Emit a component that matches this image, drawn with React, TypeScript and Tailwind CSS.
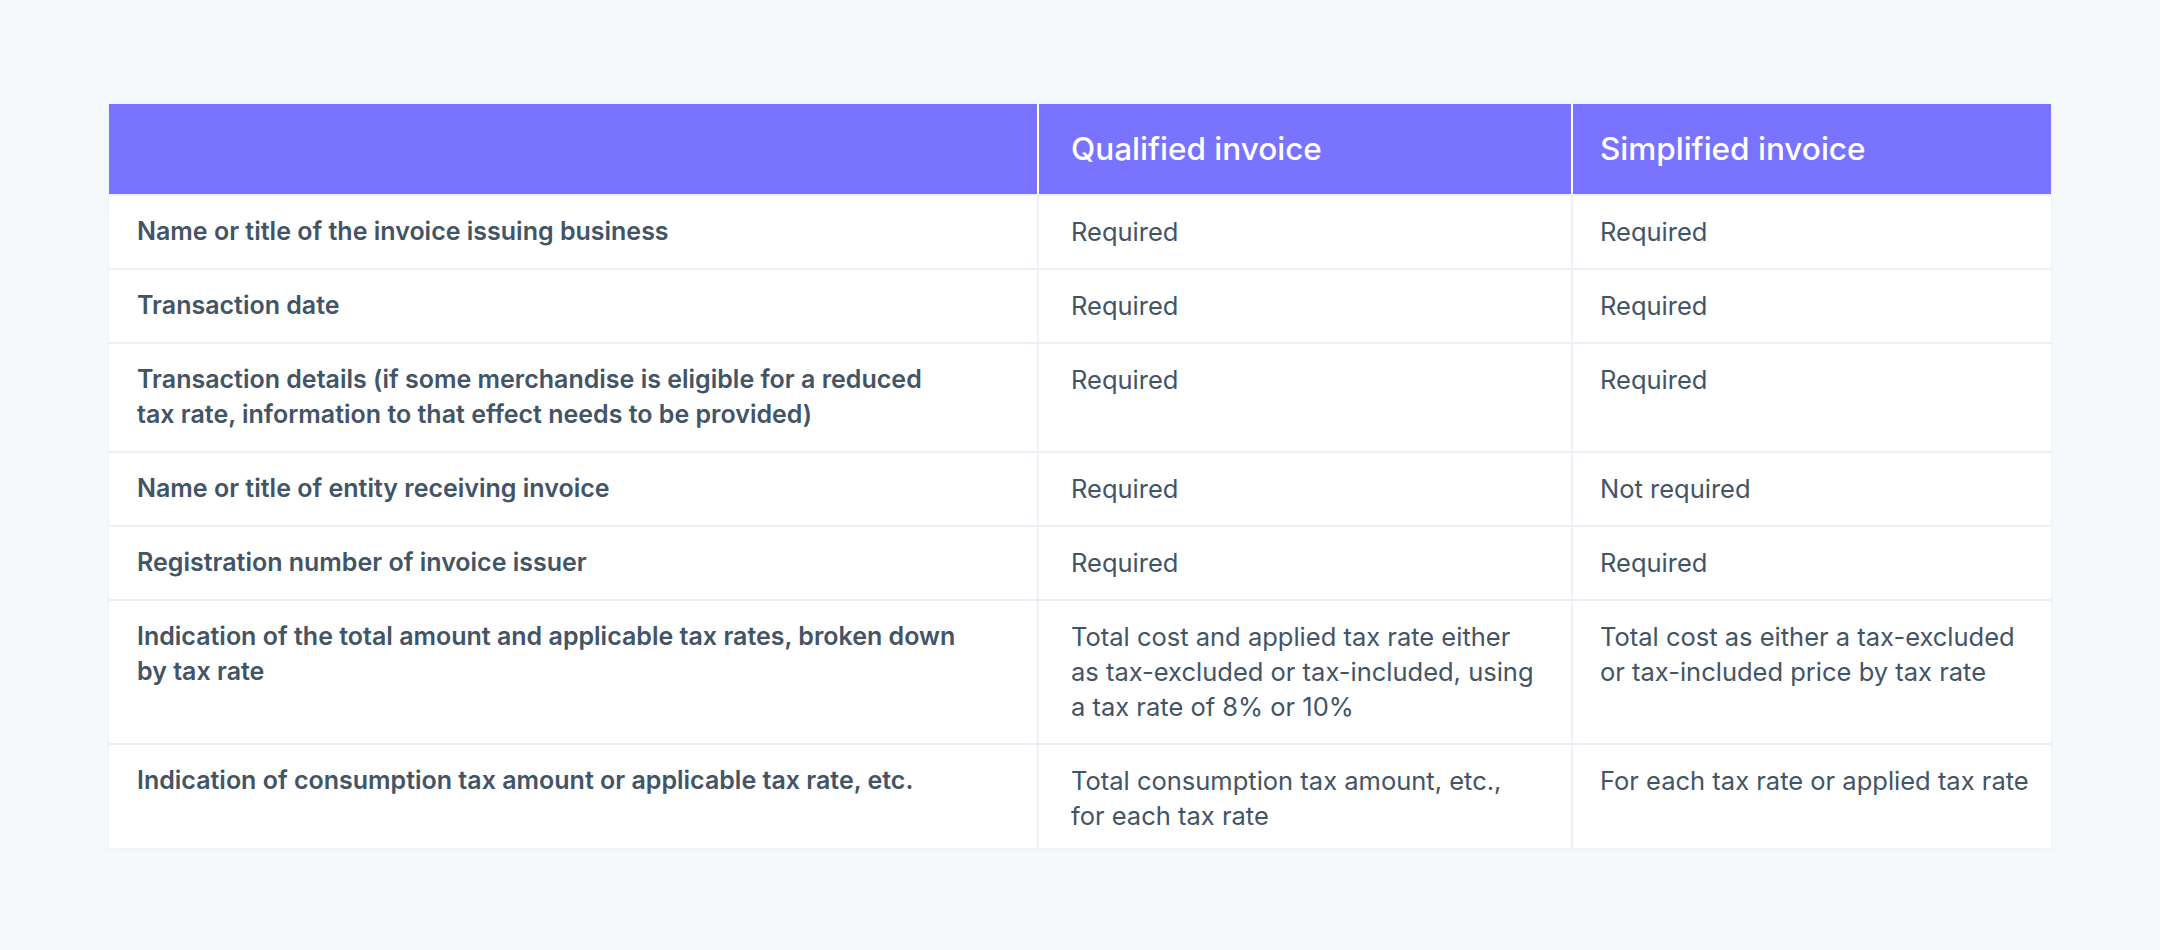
import React from "react";

type Row = { label: string[]; q: string[]; s: string[] };

const rows: Row[] = [
  { label: ["Name or title of the invoice issuing business"], q: ["Required"], s: ["Required"] },
  { label: ["Transaction date"], q: ["Required"], s: ["Required"] },
  {
    label: [
      "Transaction details (if some merchandise is eligible for a reduced",
      "tax rate, information to that effect needs to be provided)",
    ],
    q: ["Required"],
    s: ["Required"],
  },
  { label: ["Name or title of entity receiving invoice"], q: ["Required"], s: ["Not required"] },
  { label: ["Registration number of invoice issuer"], q: ["Required"], s: ["Required"] },
  {
    label: ["Indication of the total amount and applicable tax rates, broken down", "by tax rate"],
    q: ["Total cost and applied tax rate either", "as tax-excluded or tax-included, using", "a tax rate of 8% or 10%"],
    s: ["Total cost as either a tax-excluded", "or tax-included price by tax rate"],
  },
  {
    label: ["Indication of consumption tax amount or applicable tax rate, etc."],
    q: ["Total consumption tax amount, etc.,", "for each tax rate"],
    s: ["For each tax rate or applied tax rate"],
  },
];

function Lines({ lines }: { lines: string[] }) {
  return (
    <>
      {lines.map((l, i) => (
        <div key={i} className="whitespace-nowrap">
          {l}
        </div>
      ))}
    </>
  );
}

export default function App() {
  return (
    <div
      className="min-h-[950px] w-full bg-[#f6f9fc] pt-[104px]"
      style={{ fontFamily: "Inter, 'Noto Sans', 'Liberation Sans', sans-serif" }}
    >
      <div className="mx-auto w-[1942px] bg-white shadow-[0_1px_6px_rgba(50,80,130,0.06)]">
        <div className="grid h-[90px] grid-cols-[928px_534px_480px] bg-[#7a73ff] text-[31.5px] font-medium text-white">
          <div />
          <div className="flex items-center border-l-2 border-white pl-[32px]">Qualified invoice</div>
          <div className="flex items-center border-l-2 border-white pl-[27px]">Simplified invoice</div>
        </div>
        {rows.map((r, i) => {
          const last = i === rows.length - 1;
          const pad = last ? "pt-[18px] pb-[15px]" : "pt-[18px] pb-[19px]";
          return (
            <div
              key={i}
              className="grid grid-cols-[928px_534px_480px] border-t-2 border-[#e9eef7] leading-[35px] text-[#425466]"
            >
              <div className={`pl-[28px] text-[25px] font-semibold ${pad}`}>
                <Lines lines={r.label} />
              </div>
              <div className={`border-l-2 border-[#eef1f7] pl-[32px] text-[25.5px] ${pad}`}>
                <Lines lines={r.q} />
              </div>
              <div className={`border-l-2 border-[#eef1f7] pl-[27px] text-[25.5px] ${pad}`}>
                <Lines lines={r.s} />
              </div>
            </div>
          );
        })}
      </div>
    </div>
  );
}
